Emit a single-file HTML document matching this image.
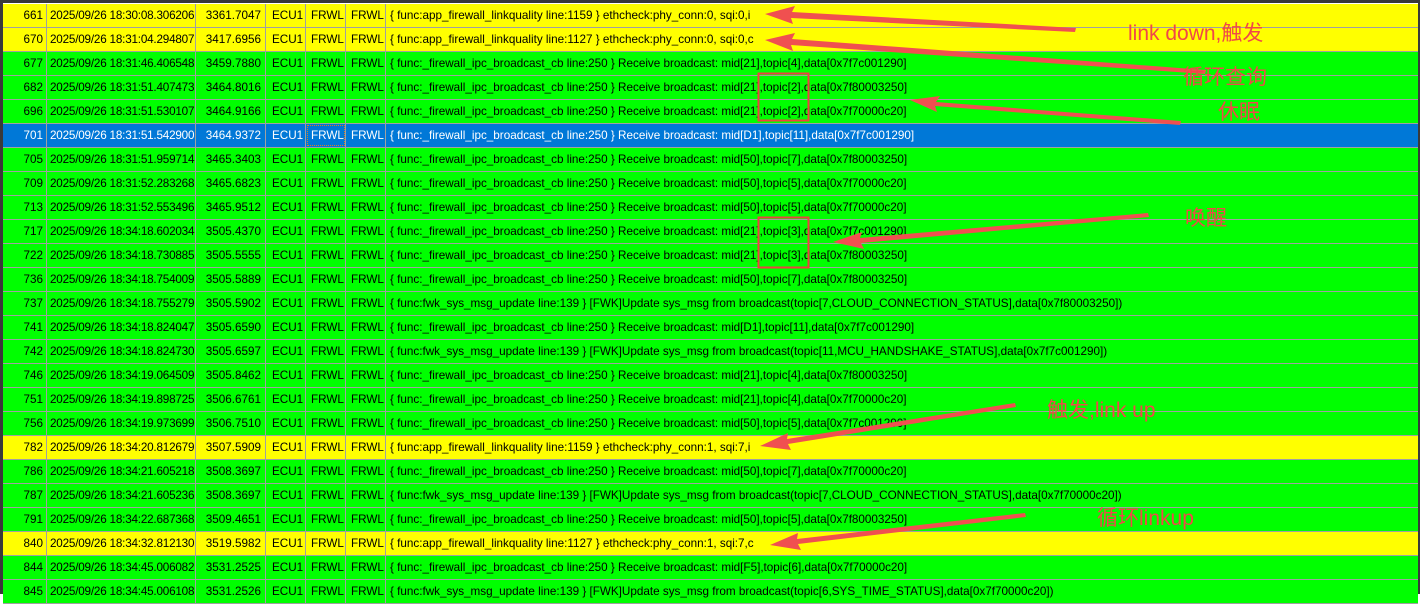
<!DOCTYPE html>
<html><head><meta charset="utf-8"><style>
body{margin:0;width:1420px;height:594px;overflow:hidden;background:#fff;position:relative;font-family:"Liberation Sans","Noto Sans CJK SC",sans-serif;font-size:11.7px;color:#000}
.top{position:absolute;left:0;top:0;width:1420px;height:3px;background:#3a3a3a}
.lb{position:absolute;left:0;top:0;width:3px;height:594px;background:#3a3a3a}
.rb{position:absolute;right:0;top:0;width:2px;height:594px;background:#3a3a3a;z-index:2}
.r{position:absolute;left:3px;width:1415px;height:23px;border-bottom:1px solid #a0a0a0;}
.y{background:#ffff00}.g{background:#00ff00}.b{background:#0078d7;color:#fff}
.c{position:absolute;top:0;height:23px;line-height:23px;border-right:1px solid #a0a0a0;white-space:nowrap;box-sizing:border-box}
.c0{left:0;width:44px;text-align:right;padding-right:3px}
.c1{left:44px;width:149px;padding-left:3px;letter-spacing:-0.2px}
.c2{left:193px;width:70px;text-align:right;padding-right:4px}
.c3{left:263px;width:40px;padding-left:6px}
.c4{left:303px;width:40px;padding-left:5px}
.c5{left:343px;width:40px;padding-left:5px}
.c6{left:383px;width:1032px;padding-left:4px;border-right:none}
.sel{outline:1px dotted #e08020;outline-offset:-2px}
svg{position:absolute;left:0;top:0}
.lab{position:absolute;color:#f04848;font-size:21px;white-space:nowrap;font-family:"Liberation Sans","Noto Sans CJK SC",sans-serif}
</style></head><body>
<div class="top"></div><div class="lb"></div><div class="rb"></div>
<div class="r y" style="top:4px"><div class="c c0">661</div><div class="c c1">2025/09/26 18:30:08.306206</div><div class="c c2">3361.7047</div><div class="c c3">ECU1</div><div class="c c4">FRWL</div><div class="c c5">FRWL</div><div class="c c6">{ func:app_firewall_linkquality line:1159 } ethcheck:phy_conn:0, sqi:0,i</div></div>
<div class="r y" style="top:28px"><div class="c c0">670</div><div class="c c1">2025/09/26 18:31:04.294807</div><div class="c c2">3417.6956</div><div class="c c3">ECU1</div><div class="c c4">FRWL</div><div class="c c5">FRWL</div><div class="c c6">{ func:app_firewall_linkquality line:1127 } ethcheck:phy_conn:0, sqi:0,c</div></div>
<div class="r g" style="top:52px"><div class="c c0">677</div><div class="c c1">2025/09/26 18:31:46.406548</div><div class="c c2">3459.7880</div><div class="c c3">ECU1</div><div class="c c4">FRWL</div><div class="c c5">FRWL</div><div class="c c6">{ func:_firewall_ipc_broadcast_cb line:250 } Receive broadcast: mid[21],topic[4],data[0x7f7c001290]</div></div>
<div class="r g" style="top:76px"><div class="c c0">682</div><div class="c c1">2025/09/26 18:31:51.407473</div><div class="c c2">3464.8016</div><div class="c c3">ECU1</div><div class="c c4">FRWL</div><div class="c c5">FRWL</div><div class="c c6">{ func:_firewall_ipc_broadcast_cb line:250 } Receive broadcast: mid[21],topic[2],data[0x7f80003250]</div></div>
<div class="r g" style="top:100px"><div class="c c0">696</div><div class="c c1">2025/09/26 18:31:51.530107</div><div class="c c2">3464.9166</div><div class="c c3">ECU1</div><div class="c c4">FRWL</div><div class="c c5">FRWL</div><div class="c c6">{ func:_firewall_ipc_broadcast_cb line:250 } Receive broadcast: mid[21],topic[2],data[0x7f70000c20]</div></div>
<div class="r b" style="top:124px"><div class="c c0">701</div><div class="c c1">2025/09/26 18:31:51.542900</div><div class="c c2">3464.9372</div><div class="c c3">ECU1</div><div class="c c4 sel">FRWL</div><div class="c c5">FRWL</div><div class="c c6">{ func:_firewall_ipc_broadcast_cb line:250 } Receive broadcast: mid[D1],topic[11],data[0x7f7c001290]</div></div>
<div class="r g" style="top:148px"><div class="c c0">705</div><div class="c c1">2025/09/26 18:31:51.959714</div><div class="c c2">3465.3403</div><div class="c c3">ECU1</div><div class="c c4">FRWL</div><div class="c c5">FRWL</div><div class="c c6">{ func:_firewall_ipc_broadcast_cb line:250 } Receive broadcast: mid[50],topic[7],data[0x7f80003250]</div></div>
<div class="r g" style="top:172px"><div class="c c0">709</div><div class="c c1">2025/09/26 18:31:52.283268</div><div class="c c2">3465.6823</div><div class="c c3">ECU1</div><div class="c c4">FRWL</div><div class="c c5">FRWL</div><div class="c c6">{ func:_firewall_ipc_broadcast_cb line:250 } Receive broadcast: mid[50],topic[5],data[0x7f70000c20]</div></div>
<div class="r g" style="top:196px"><div class="c c0">713</div><div class="c c1">2025/09/26 18:31:52.553496</div><div class="c c2">3465.9512</div><div class="c c3">ECU1</div><div class="c c4">FRWL</div><div class="c c5">FRWL</div><div class="c c6">{ func:_firewall_ipc_broadcast_cb line:250 } Receive broadcast: mid[50],topic[5],data[0x7f70000c20]</div></div>
<div class="r g" style="top:220px"><div class="c c0">717</div><div class="c c1">2025/09/26 18:34:18.602034</div><div class="c c2">3505.4370</div><div class="c c3">ECU1</div><div class="c c4">FRWL</div><div class="c c5">FRWL</div><div class="c c6">{ func:_firewall_ipc_broadcast_cb line:250 } Receive broadcast: mid[21],topic[3],data[0x7f7c001290]</div></div>
<div class="r g" style="top:244px"><div class="c c0">722</div><div class="c c1">2025/09/26 18:34:18.730885</div><div class="c c2">3505.5555</div><div class="c c3">ECU1</div><div class="c c4">FRWL</div><div class="c c5">FRWL</div><div class="c c6">{ func:_firewall_ipc_broadcast_cb line:250 } Receive broadcast: mid[21],topic[3],data[0x7f80003250]</div></div>
<div class="r g" style="top:268px"><div class="c c0">736</div><div class="c c1">2025/09/26 18:34:18.754009</div><div class="c c2">3505.5889</div><div class="c c3">ECU1</div><div class="c c4">FRWL</div><div class="c c5">FRWL</div><div class="c c6">{ func:_firewall_ipc_broadcast_cb line:250 } Receive broadcast: mid[50],topic[7],data[0x7f80003250]</div></div>
<div class="r g" style="top:292px"><div class="c c0">737</div><div class="c c1">2025/09/26 18:34:18.755279</div><div class="c c2">3505.5902</div><div class="c c3">ECU1</div><div class="c c4">FRWL</div><div class="c c5">FRWL</div><div class="c c6">{ func:fwk_sys_msg_update line:139 } [FWK]Update sys_msg from broadcast(topic[7,CLOUD_CONNECTION_STATUS],data[0x7f80003250])</div></div>
<div class="r g" style="top:316px"><div class="c c0">741</div><div class="c c1">2025/09/26 18:34:18.824047</div><div class="c c2">3505.6590</div><div class="c c3">ECU1</div><div class="c c4">FRWL</div><div class="c c5">FRWL</div><div class="c c6">{ func:_firewall_ipc_broadcast_cb line:250 } Receive broadcast: mid[D1],topic[11],data[0x7f7c001290]</div></div>
<div class="r g" style="top:340px"><div class="c c0">742</div><div class="c c1">2025/09/26 18:34:18.824730</div><div class="c c2">3505.6597</div><div class="c c3">ECU1</div><div class="c c4">FRWL</div><div class="c c5">FRWL</div><div class="c c6">{ func:fwk_sys_msg_update line:139 } [FWK]Update sys_msg from broadcast(topic[11,MCU_HANDSHAKE_STATUS],data[0x7f7c001290])</div></div>
<div class="r g" style="top:364px"><div class="c c0">746</div><div class="c c1">2025/09/26 18:34:19.064509</div><div class="c c2">3505.8462</div><div class="c c3">ECU1</div><div class="c c4">FRWL</div><div class="c c5">FRWL</div><div class="c c6">{ func:_firewall_ipc_broadcast_cb line:250 } Receive broadcast: mid[21],topic[4],data[0x7f80003250]</div></div>
<div class="r g" style="top:388px"><div class="c c0">751</div><div class="c c1">2025/09/26 18:34:19.898725</div><div class="c c2">3506.6761</div><div class="c c3">ECU1</div><div class="c c4">FRWL</div><div class="c c5">FRWL</div><div class="c c6">{ func:_firewall_ipc_broadcast_cb line:250 } Receive broadcast: mid[21],topic[4],data[0x7f70000c20]</div></div>
<div class="r g" style="top:412px"><div class="c c0">756</div><div class="c c1">2025/09/26 18:34:19.973699</div><div class="c c2">3506.7510</div><div class="c c3">ECU1</div><div class="c c4">FRWL</div><div class="c c5">FRWL</div><div class="c c6">{ func:_firewall_ipc_broadcast_cb line:250 } Receive broadcast: mid[50],topic[5],data[0x7f7c001290]</div></div>
<div class="r y" style="top:436px"><div class="c c0">782</div><div class="c c1">2025/09/26 18:34:20.812679</div><div class="c c2">3507.5909</div><div class="c c3">ECU1</div><div class="c c4">FRWL</div><div class="c c5">FRWL</div><div class="c c6">{ func:app_firewall_linkquality line:1159 } ethcheck:phy_conn:1, sqi:7,i</div></div>
<div class="r g" style="top:460px"><div class="c c0">786</div><div class="c c1">2025/09/26 18:34:21.605218</div><div class="c c2">3508.3697</div><div class="c c3">ECU1</div><div class="c c4">FRWL</div><div class="c c5">FRWL</div><div class="c c6">{ func:_firewall_ipc_broadcast_cb line:250 } Receive broadcast: mid[50],topic[7],data[0x7f70000c20]</div></div>
<div class="r g" style="top:484px"><div class="c c0">787</div><div class="c c1">2025/09/26 18:34:21.605236</div><div class="c c2">3508.3697</div><div class="c c3">ECU1</div><div class="c c4">FRWL</div><div class="c c5">FRWL</div><div class="c c6">{ func:fwk_sys_msg_update line:139 } [FWK]Update sys_msg from broadcast(topic[7,CLOUD_CONNECTION_STATUS],data[0x7f70000c20])</div></div>
<div class="r g" style="top:508px"><div class="c c0">791</div><div class="c c1">2025/09/26 18:34:22.687368</div><div class="c c2">3509.4651</div><div class="c c3">ECU1</div><div class="c c4">FRWL</div><div class="c c5">FRWL</div><div class="c c6">{ func:_firewall_ipc_broadcast_cb line:250 } Receive broadcast: mid[50],topic[5],data[0x7f80003250]</div></div>
<div class="r y" style="top:532px"><div class="c c0">840</div><div class="c c1">2025/09/26 18:34:32.812130</div><div class="c c2">3519.5982</div><div class="c c3">ECU1</div><div class="c c4">FRWL</div><div class="c c5">FRWL</div><div class="c c6">{ func:app_firewall_linkquality line:1127 } ethcheck:phy_conn:1, sqi:7,c</div></div>
<div class="r g" style="top:556px"><div class="c c0">844</div><div class="c c1">2025/09/26 18:34:45.006082</div><div class="c c2">3531.2525</div><div class="c c3">ECU1</div><div class="c c4">FRWL</div><div class="c c5">FRWL</div><div class="c c6">{ func:_firewall_ipc_broadcast_cb line:250 } Receive broadcast: mid[F5],topic[6],data[0x7f70000c20]</div></div>
<div class="r g" style="top:580px"><div class="c c0">845</div><div class="c c1">2025/09/26 18:34:45.006108</div><div class="c c2">3531.2526</div><div class="c c3">ECU1</div><div class="c c4">FRWL</div><div class="c c5">FRWL</div><div class="c c6">{ func:fwk_sys_msg_update line:139 } [FWK]Update sys_msg from broadcast(topic[6,SYS_TIME_STATUS],data[0x7f70000c20])</div></div>

<svg width="1420" height="594" viewBox="0 0 1420 594">
<g fill="#f05050" stroke="none">
<polygon points="765,14 795,6 792,12 1076,28 1075,32 791,18 793,24"/>
<polygon points="765,40 795,33 792,39 1206,70 1205,74 791,45 793,51"/>
<polygon points="910,100 940,96 936,102 1181,121 1180,125 935,106 937,112"/>
<polygon points="833,242 862,232 860,238 1148,213 1149,217 861,243 864,249"/>
<polygon points="760,446 788,433 787,439 1015,403 1016,407 788,444 791,450"/>
<polygon points="770,545 798,533 797,539 1025,513 1026,517 798,544 801,550"/>
</g>
<rect x="758.5" y="73.5" width="50" height="47" fill="none" stroke="#f04040" stroke-width="2"/>
<rect x="758.5" y="217.5" width="50" height="50" fill="none" stroke="#f04040" stroke-width="2"/>
</svg>
<div class="lab" style="left:1128px;top:17px">link down,触发</div>
<div class="lab" style="left:1183px;top:61px">循环查询</div>
<div class="lab" style="left:1218px;top:96px">休眠</div>
<div class="lab" style="left:1185px;top:202px">唤醒</div>
<div class="lab" style="left:1047px;top:394px">触发,link up</div>
<div class="lab" style="left:1097px;top:502px">循环linkup</div>
</body></html>
